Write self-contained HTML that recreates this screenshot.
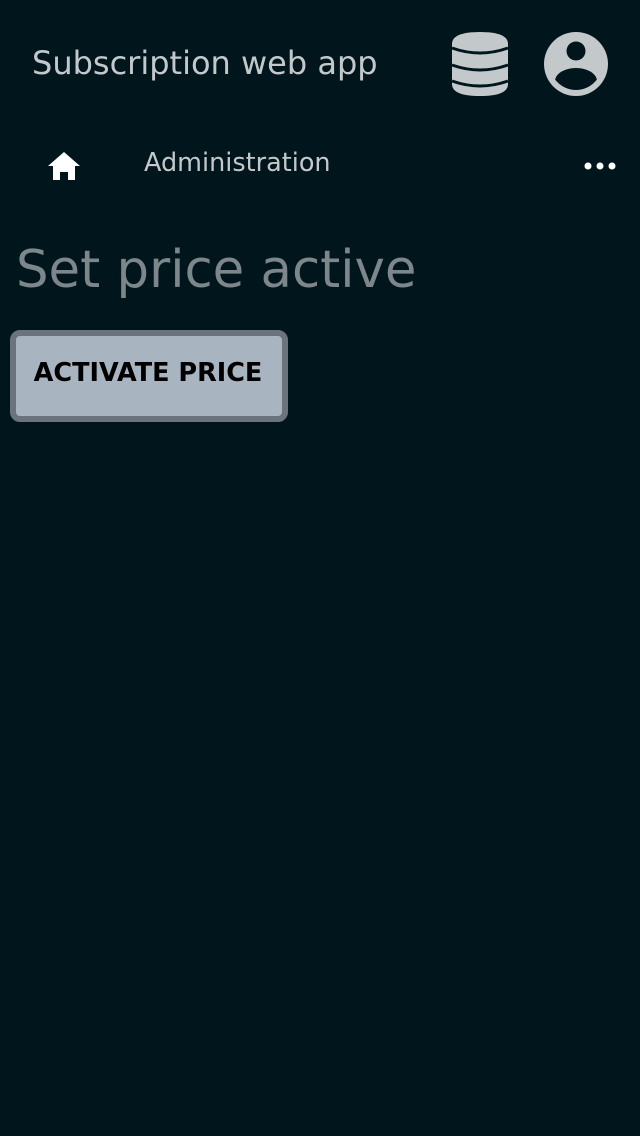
<!DOCTYPE html>
<html><head><meta charset="utf-8"><style>
html,body{margin:0;padding:0;background:#01151c;width:640px;height:1136px;overflow:hidden;font-family:"DejaVu Sans","Liberation Sans",sans-serif}
.t{position:absolute;white-space:nowrap}
</style></head><body>
<div class="t" style="left:32px;top:44px;font-size:32px;color:#c3c9cb">Subscription web app</div>
<svg class="t" style="left:0;top:0" width="640" height="200">
 <g fill="#c3c9cb">
  <path d="M452 44 Q452 32 480 32 Q508 32 508 44 L508 84 Q508 96 480 96 Q452 96 452 84 Z"/>
  <circle cx="576" cy="64" r="32"/>
 </g>
 <g fill="none" stroke="#01151c" stroke-width="3">
  <path d="M452 48 Q480 58 508 48"/>
  <path d="M452 65 Q480 75 508 65"/>
  <path d="M452 81 Q480 91 508 81"/>
 </g>
 <circle cx="576" cy="51" r="9.5" fill="#01151c"/>
 <clipPath id="c"><circle cx="576" cy="64" r="26"/></clipPath>
 <ellipse cx="576" cy="81" rx="21" ry="13" fill="#01151c" clip-path="url(#c)"/>
 <path d="M64 152 L80 166 L75 166 L75 180 L68 180 L68 172 L60 172 L60 180 L53 180 L53 166 L48 166 Z" fill="#fff"/>
 <circle cx="588" cy="166" r="3.5" fill="#fff"/><circle cx="600" cy="166" r="3.5" fill="#fff"/><circle cx="612" cy="166" r="3.5" fill="#fff"/>
</svg>
<div class="t" style="left:144px;top:148px;font-size:25.5px;color:#c3c9cb">Administration</div>
<div class="t" style="left:16px;top:240px;font-size:51.3px;color:#7d878b">Set price active</div>
<div class="t" style="left:10px;top:330px;width:266px;height:80px;border:6px solid #6b737c;border-radius:10px;background:#a9b4c1;font-weight:bold;font-size:25.5px;color:#000;line-height:80px;text-align:center;"><span style="position:relative;top:-3px;left:-1px">ACTIVATE PRICE</span></div>
</body></html>
